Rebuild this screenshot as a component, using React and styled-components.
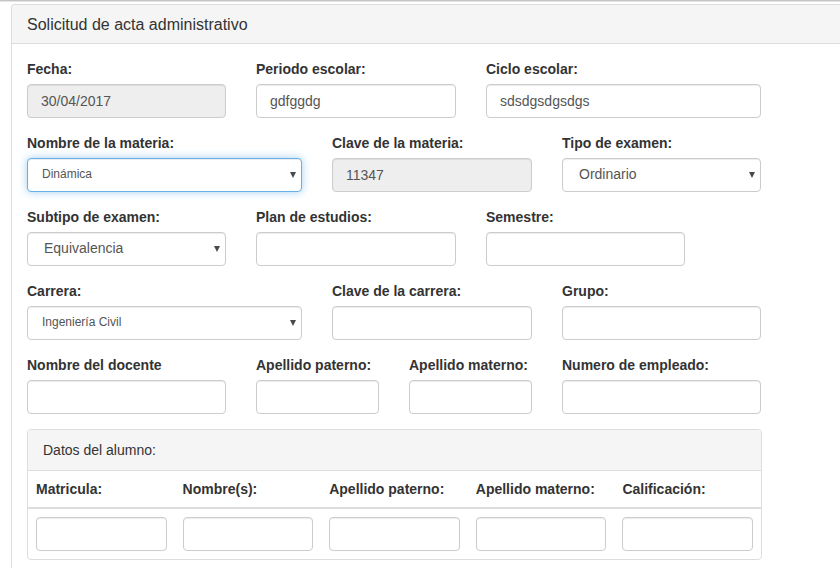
import React from "react";
import styled, { createGlobalStyle, css } from "styled-components";

const GlobalStyle = createGlobalStyle`
  html, body {
    margin: 0;
    padding: 0;
    overflow: hidden;
    background: #fff;
  }
  body {
    font-family: "Liberation Sans", Arial, Helvetica, sans-serif;
    font-size: 14px;
    line-height: 1.42857;
    color: #333;
  }
  * {
    box-sizing: border-box;
  }
`;

const TopLine = styled.div`
  height: 2px;
  background: #c4c4c4;
  border-bottom: 1px solid #e6e6e6;
`;

const Page = styled.div`
  padding: 2px 0 0 11px;
`;

// panel continues past the right edge of the window, so no right border shows
const Panel = styled.div`
  width: calc(100vw - 11px);
  border: 1px solid #ddd;
  border-right: none;
  border-radius: 4px 0 0 4px;
  background: #fff;
`;

const PanelHeading = styled.div`
  background: #f5f5f5;
  border-bottom: 1px solid #ddd;
  border-radius: 3px 0 0 0;
  padding: 11px 15px 9px;
`;

const PanelTitle = styled.h3`
  margin: 0;
  font-size: 16px;
  font-weight: 400;
  line-height: 1.1;
  color: #333;
`;

const PanelBody = styled.div`
  padding: 15px;
`;

const Row = styled.div`
  display: grid;
  grid-template-columns: ${(p) => p.cols};
`;

const Field = styled.div`
  margin-bottom: 15px;
`;

const Label = styled.label`
  display: inline-block;
  padding-top: 1px;
  margin-bottom: 4px;
  font-weight: 700;
  color: #333;
`;

const controlStyles = css`
  display: block;
  width: ${(p) => p.w || "100%"};
  height: 34px;
  padding: 6px 12px;
  font-family: inherit;
  font-size: 14px;
  line-height: 1.42857;
  color: #555;
  background: ${(p) => (p.disabled ? "#eee" : "#fff")};
  border: 1px solid #ccc;
  border-radius: 4px;
  box-shadow: inset 0 1px 1px rgba(0, 0, 0, 0.075);
  outline: none;
`;

const Input = styled.input`
  ${controlStyles}
  padding-left: 13px;
  opacity: 1;
  -webkit-text-fill-color: #555;
`;

const SelectWrap = styled.div`
  position: relative;
  width: ${(p) => p.w};
`;

const Select = styled.select`
  ${controlStyles}
  width: 100%;
  appearance: none;
  -webkit-appearance: none;
  padding-left: ${(p) => (p.small ? "14px" : "16px")};
  font-size: ${(p) => (p.small ? "12px" : "14px")};
  ${(p) =>
    p.focused &&
    css`
      border-color: #66afe9;
      box-shadow: inset 0 1px 1px rgba(0, 0, 0, 0.075),
        0 0 8px rgba(102, 175, 233, 0.6);
    `}
`;

const Arrow = styled.span`
  position: absolute;
  right: 6px;
  top: 14px;
  width: 0;
  height: 0;
  border-left: 3.5px solid transparent;
  border-right: 3.5px solid transparent;
  border-top: 6px solid #4a4a4a;
  pointer-events: none;
`;

const InnerPanel = styled.div`
  border: 1px solid #ddd;
  border-radius: 4px;
  width: 735px;
  overflow: hidden;
`;

const InnerHeading = styled.div`
  background: #f5f5f5;
  border-bottom: 1px solid #ddd;
  padding: 11px 15px 9px;
  color: #333;
`;

const Table = styled.table`
  width: 100%;
  border-collapse: collapse;
  table-layout: fixed;
`;

const Th = styled.th`
  text-align: left;
  padding: 9px 8px 8px;
  font-weight: 700;
  color: #333;
  border-bottom: 2px solid #ddd;
`;

const Td = styled.td`
  padding: 8px;
`;

const Dropdown = ({ w, value, small, focused }) => (
  <SelectWrap w={w}>
    <Select defaultValue={value} small={small} focused={focused}>
      <option>{value}</option>
    </Select>
    <Arrow />
  </SelectWrap>
);

const alumnoCols = [
  "Matricula:",
  "Nombre(s):",
  "Apellido paterno:",
  "Apellido materno:",
  "Calificación:",
];

export default function App() {
  return (
    <>
      <GlobalStyle />
      <TopLine />
      <Page>
        <Panel>
          <PanelHeading>
            <PanelTitle>Solicitud de acta administrativo</PanelTitle>
          </PanelHeading>
          <PanelBody>
            <Row cols="229px 230px 305px">
              <Field>
                <Label>Fecha:</Label>
                <Input w="199px" disabled defaultValue="30/04/2017" />
              </Field>
              <Field>
                <Label>Periodo escolar:</Label>
                <Input w="200px" defaultValue="gdfggdg" />
              </Field>
              <Field>
                <Label>Ciclo escolar:</Label>
                <Input w="275px" defaultValue="sdsdgsdgsdgs" />
              </Field>
            </Row>
            <Row cols="305px 230px 230px">
              <Field>
                <Label>Nombre de la materia:</Label>
                <Dropdown w="275px" value="Dinámica" small focused />
              </Field>
              <Field>
                <Label>Clave de la materia:</Label>
                <Input w="200px" disabled defaultValue="11347" />
              </Field>
              <Field>
                <Label>Tipo de examen:</Label>
                <Dropdown w="199px" value="Ordinario" />
              </Field>
            </Row>
            <Row cols="229px 230px 305px">
              <Field>
                <Label>Subtipo de examen:</Label>
                <Dropdown w="199px" value="Equivalencia" />
              </Field>
              <Field>
                <Label>Plan de estudios:</Label>
                <Input w="200px" />
              </Field>
              <Field>
                <Label>Semestre:</Label>
                <Input w="199px" />
              </Field>
            </Row>
            <Row cols="305px 230px 230px">
              <Field>
                <Label>Carrera:</Label>
                <Dropdown w="275px" value="Ingeniería Civil" small />
              </Field>
              <Field>
                <Label>Clave de la carrera:</Label>
                <Input w="200px" />
              </Field>
              <Field>
                <Label>Grupo:</Label>
                <Input w="199px" />
              </Field>
            </Row>
            <Row cols="229px 153px 153px 230px">
              <Field>
                <Label>Nombre del docente</Label>
                <Input w="199px" />
              </Field>
              <Field>
                <Label>Apellido paterno:</Label>
                <Input w="123px" />
              </Field>
              <Field>
                <Label>Apellido materno:</Label>
                <Input w="123px" />
              </Field>
              <Field>
                <Label>Numero de empleado:</Label>
                <Input w="199px" />
              </Field>
            </Row>
            <InnerPanel>
              <InnerHeading>Datos del alumno:</InnerHeading>
              <Table>
                <thead>
                  <tr>
                    {alumnoCols.map((c) => (
                      <Th key={c}>{c}</Th>
                    ))}
                  </tr>
                </thead>
                <tbody>
                  <tr>
                    {alumnoCols.map((c) => (
                      <Td key={c}>
                        <Input />
                      </Td>
                    ))}
                  </tr>
                </tbody>
              </Table>
            </InnerPanel>
          </PanelBody>
        </Panel>
      </Page>
    </>
  );
}
